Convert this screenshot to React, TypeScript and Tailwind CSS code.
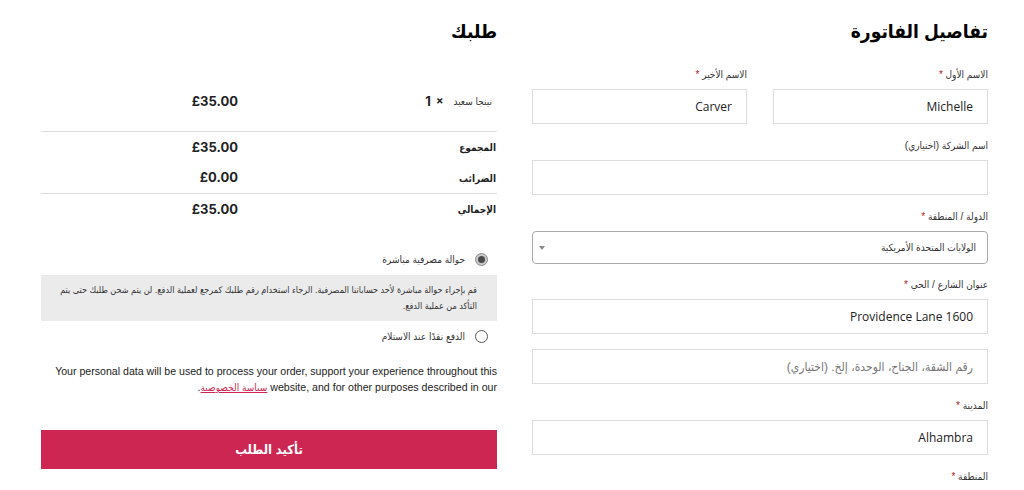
import React from 'react';

const arabic = "font-['Liberation_Sans','DejaVu_Sans_Condensed','DejaVu_Sans',sans-serif] font-stretch-condensed";

function Label({ text, required = true }: { text: string; required?: boolean }) {
  return (
    <div className="h-4 mb-[6px] text-[10px] leading-4 text-[#333]">
      {text}
      {required && <span className="text-[#b22222]"> *</span>}
    </div>
  );
}

function Input({ value, placeholder }: { value?: string; placeholder?: string }) {
  return (
    <div className="h-[35px] border border-[#dcdcdc] bg-white flex items-center pr-[14px] text-[12px] text-[#222]">
      {value !== undefined ? (
        <span className="font-['Open_Sans',sans-serif] font-stretch-normal">{value}</span>
      ) : (
        <span className="text-[#777] text-[12px]">{placeholder}</span>
      )}
    </div>
  );
}

function Radio({ checked, label }: { checked?: boolean; label: string }) {
  return (
    <div className="h-4 flex items-center gap-[10px] pr-[9px] text-[10px] text-[#333]">
      {checked ? (
        <span className="w-[13px] h-[13px] rounded-full bg-[#c9c9c9] border border-[#8a8a8a] flex items-center justify-center">
          <span className="w-[7px] h-[7px] rounded-full bg-[#4a4a4a]" />
        </span>
      ) : (
        <span className="w-[13px] h-[13px] rounded-full border border-[#555] bg-white" />
      )}
      <span>{label}</span>
    </div>
  );
}

function TotalRow({ label, price, border }: { label: string; price: string; border?: boolean }) {
  return (
    <div className={`grid grid-cols-[259px_1fr] items-center h-[31px] ${border ? 'border-b border-[#dedede]' : ''}`}>
      <div className="text-[10px] font-bold text-[#222] pr-[1px]">{label}</div>
      <div className="font-['Inter',sans-serif] font-stretch-normal text-[13px] font-bold text-[#222]">{price}</div>
    </div>
  );
}

export default function App() {
  return (
    <div dir="rtl" className={`w-[1024px] h-[490px] overflow-hidden bg-white flex gap-[35px] pr-[36px] pl-[41px] pt-[16px] ${arabic}`}>
      {/* billing details */}
      <div className="w-[456px] flex flex-col">
        <h2 className="h-[32px] text-[19px] font-bold leading-[32px] text-black">تفاصيل الفاتورة</h2>
        <div className="mt-[19px] flex gap-[26px]">
          <div className="flex-1">
            <Label text="الاسم الأول" />
            <Input value="Michelle" />
          </div>
          <div className="flex-1">
            <Label text="الاسم الأخير" />
            <Input value="Carver" />
          </div>
        </div>
        <div className="mt-[14px]">
          <Label text="اسم الشركة (اختياري)" required={false} />
          <Input value="" />
        </div>
        <div className="mt-[14px]">
          <Label text="الدولة / المنطقة" />
          <div className="h-[33px] border border-[#aaa] rounded-[4px] flex items-center justify-between pr-[11px] pl-[6px] text-[10px] text-[#333]">
            <span>الولايات المتحدة الأمريكية</span>
            <span className="w-0 h-0 border-x-[3px] border-x-transparent border-t-[4px] border-t-[#888]" />
          </div>
        </div>
        <div className="mt-[13px]">
          <Label text="عنوان الشارع / الحي" />
          <Input value="Providence Lane 1600" />
        </div>
        <div className="mt-[15px]">
          <Input placeholder="رقم الشقة، الجناح، الوحدة، إلخ. (اختياري)" />
        </div>
        <div className="mt-[14px]">
          <Label text="المدينة" />
          <Input value="Alhambra" />
        </div>
        <div className="mt-[14px]">
          <Label text="المنطقة" />
        </div>
      </div>

      {/* order review */}
      <div className="w-[456px] flex flex-col">
        <h2 className="h-[32px] text-[19px] font-bold leading-[32px] text-black">طلبك</h2>
        <div className="mt-[24px] h-[60px] grid grid-cols-[259px_1fr] items-center border-b border-[#dedede]">
          <div className="pr-[5px] text-[10px] text-[#333] flex items-center gap-[10px]">
            <span>نينجا سعيد</span>
            <span className="flex gap-[5px] font-['Inter',sans-serif] font-stretch-normal text-[13px] font-bold text-[#222]">
              <span className="text-[11px]">×</span>
              <span>1</span>
            </span>
          </div>
          <div className="font-['Inter',sans-serif] font-stretch-normal text-[13px] font-bold text-[#222]">£35.00</div>
        </div>
        <TotalRow label="المجموع" price="£35.00" />
        <TotalRow label="الضرائب" price="£0.00" border />
        <TotalRow label="الإجمالي" price="£35.00" />

        <div className="mt-[26px]">
          <Radio checked label="حوالة مصرفية مباشرة" />
        </div>
        <div className="mt-[8px] h-[46px] bg-[#ebebeb] pr-[20px] pl-[8px] flex items-center text-[9px] leading-4 text-[#333]">
          قم بإجراء حوالة مباشرة لأحد حساباتنا المصرفية. الرجاء استخدام رقم طلبك كمرجع لعملية الدفع. لن يتم شحن طلبك حتى يتم التأكد من عملية الدفع.
        </div>
        <div className="mt-[7px]">
          <Radio label="الدفع نقدًا عند الاستلام" />
        </div>

        <p className="mt-[19px] text-[10.6px] leading-[16px] text-[#222] font-['Liberation_Sans','DejaVu_Sans_Condensed',sans-serif] font-stretch-normal">
          Your personal data will be used to process your order, support your experience throughout this website, and for other purposes described in our{' '}
          <a href="#" className="text-[#cd2653] underline text-[10px] font-stretch-condensed">سياسة الخصوصية</a>.
        </p>

        <button className="mt-[34px] h-[39px] w-full bg-[#cd2653] text-white text-[13px] font-bold">
          تأكيد الطلب
        </button>
      </div>
    </div>
  );
}
